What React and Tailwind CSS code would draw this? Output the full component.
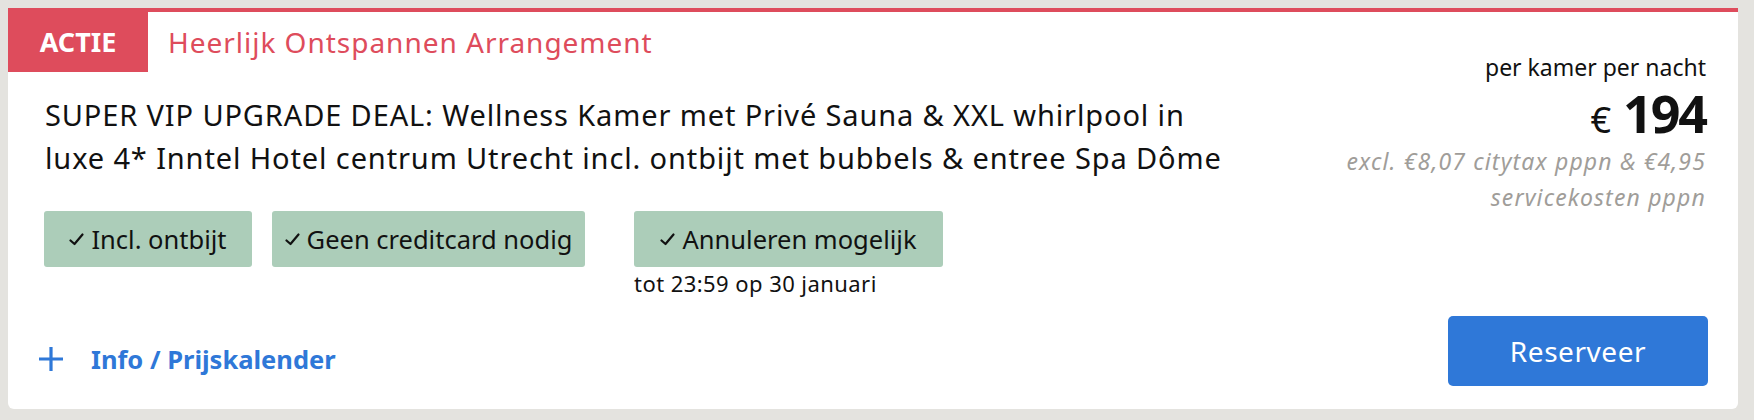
import React from "react";

const Check = () => (
  <svg width="15" height="13" viewBox="0 0 15 13" className="mr-[7px] shrink-0">
    <polyline points="1.5,7.5 5.5,11 13.5,1.5" fill="none" stroke="#111" strokeWidth="2.2" strokeLinecap="round" strokeLinejoin="round" />
  </svg>
);

const Pill = ({ children, w }) => (
  <div className={`flex h-[56px] items-center justify-center rounded-[3px] bg-[#accdb9] text-[25.5px] text-[#111] ${w}`}>
    <Check />
    <span>{children}</span>
  </div>
);

export default function App() {
  return (
    <div className="min-h-[420px] bg-[#e4e3df] pl-[8px] pr-[16px] pt-[8px]" style={{ fontFamily: '"Noto Sans", "Open Sans", sans-serif' }}>
      <div className="flex h-[401px] rounded-b-[6px] border-t-4 border-[#de4c5c] bg-white">
        {/* left column */}
        <div className="flex flex-1 flex-col">
          <div className="flex h-[60px] items-center">
            <div className="flex h-full w-[140px] items-center justify-center bg-[#de4c5c] text-[27px] font-bold text-white">
              ACTIE
            </div>
            <div className="ml-[20px] text-[28px] tracking-[0.035em] text-[#de4c5c]">Heerlijk Ontspannen Arrangement</div>
          </div>
          <div className="mt-[21px] pl-[37px] text-[29px] leading-[43px] tracking-[0.03em] text-[#111]">
            SUPER VIP UPGRADE DEAL: Wellness Kamer met Privé Sauna &amp; XXL whirlpool in
            <br />
            luxe 4* Inntel Hotel centrum Utrecht incl. ontbijt met bubbels &amp; entree Spa Dôme
          </div>
          <div className="mt-[32px] flex pl-[36px]">
            <Pill w="w-[208px]">Incl. ontbijt</Pill>
            <div className="ml-[20px]">
              <Pill w="w-[313px]">Geen creditcard nodig</Pill>
            </div>
            <div className="ml-[49px] flex flex-col">
              <Pill w="w-[309px]">Annuleren mogelijk</Pill>
              <div className="mt-[3px] text-[22px] leading-[26px] tracking-[0.02em] text-[#111]">tot 23:59 op 30 januari</div>
            </div>
          </div>
          <div className="mt-auto mb-[31px] flex items-center pl-[30px]">
            <svg width="26" height="26" viewBox="0 0 26 26" className="shrink-0">
              <path d="M13 1v24M1 13h24" stroke="#2f78d8" strokeWidth="3.2" fill="none" />
            </svg>
            <a className="ml-[27px] text-[25.5px] font-bold text-[#2f78d8]">Info / Prijskalender</a>
          </div>
        </div>
        {/* right column */}
        <div className="flex w-[440px] flex-col items-end pr-[32px]">
          <div className="mt-[40px] text-[23px] leading-[30px] text-[#111]">per kamer per nacht</div>
          <div className="mt-[6px] flex h-[50px] items-baseline text-[#111]">
            <span className="mr-[12px] text-[36px] leading-[50px]">€</span>
            <span className="text-[52px] font-bold leading-[50px] tracking-[-0.04em]">194</span>
          </div>
          <div className="mt-[5px] text-right text-[23px] italic leading-[36px] tracking-[0.05em] text-[#a09d99]">
            excl. €8,07 citytax pppn &amp; €4,95
            <br />
            servicekosten pppn
          </div>
          <button className="mt-auto mb-[23px] mr-[-2px] flex h-[70px] w-[260px] items-center justify-center rounded-[5px] bg-[#2f78d8] text-[28px] tracking-[0.02em] text-white">
            Reserveer
          </button>
        </div>
      </div>
    </div>
  );
}
